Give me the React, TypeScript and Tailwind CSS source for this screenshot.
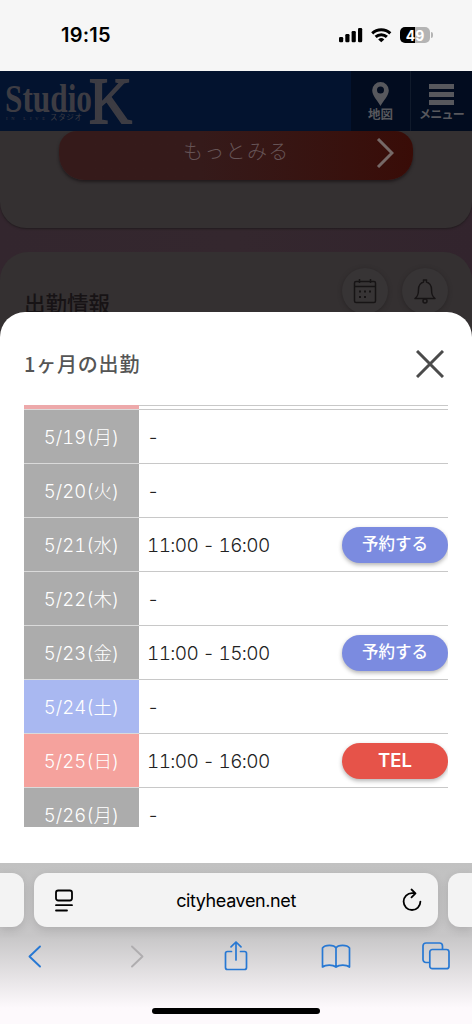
import React from "react";

const JP = "font-['Inter','Noto_Sans_CJK_JP',sans-serif]";

type Kind = "weekday" | "saturday" | "sunday";

interface Shift {
  date: string;
  kind: Kind;
  time?: string;
  action?: "reserve" | "tel";
}

const shifts: Shift[] = [
  { date: "5/19(月)", kind: "weekday" },
  { date: "5/20(火)", kind: "weekday" },
  { date: "5/21(水)", kind: "weekday", time: "11:00 - 16:00", action: "reserve" },
  { date: "5/22(木)", kind: "weekday" },
  { date: "5/23(金)", kind: "weekday", time: "11:00 - 15:00", action: "reserve" },
  { date: "5/24(土)", kind: "saturday" },
  { date: "5/25(日)", kind: "sunday", time: "11:00 - 16:00", action: "tel" },
  { date: "5/26(月)", kind: "weekday" },
];

const dayColor: Record<Kind, string> = {
  weekday: "bg-[#acacac]",
  saturday: "bg-[#a9b8f1]",
  sunday: "bg-[#f5a29d]",
};

function StatusBar() {
  return (
    <div className="flex h-[71px] shrink-0 justify-between bg-[#f6f6f6] pl-[61px] pr-[39px] text-black">
      <span className="mt-[21px] text-[20px] leading-[28px] font-semibold tracking-[0.2px]">19:15</span>
      <div className="mt-[27px] flex h-4 items-start">
        <svg width="24" height="16" viewBox="0 0 24 16">
          <rect x="0" y="10" width="4.2" height="5.3" rx="1.2" />
          <rect x="6.3" y="7" width="4.2" height="8.3" rx="1.2" />
          <rect x="12.6" y="4" width="4.2" height="11.3" rx="1.2" />
          <rect x="19" y="1" width="4.2" height="14.3" rx="1.2" />
        </svg>
        <svg className="ml-2" width="21" height="16" viewBox="0 0 21 16" fill="none" stroke="black" strokeWidth="3">
          <path d="M1.2 6.300a13.200 13.200 0 0 1 18.100 0" />
          <path d="M4.600 9.900a8.300 8.300 0 0 1 11.300 0" />
          <path d="M10.250 15.200 7.200 12.400a4.500 4.500 0 0 1 6.100 0z" fill="black" stroke="none" />
        </svg>
        <div className="ml-[8px] flex h-4 w-[30px] items-center justify-center rounded-[5px] bg-linear-to-r from-black from-50% to-[#b4b4b4] to-50% text-[14px] font-bold text-white">
          49
        </div>
        <div className="mt-[5px] ml-[1px] h-[6px] w-[2px] rounded-r-full bg-[#b4b4b4]" />
      </div>
    </div>
  );
}

function SiteHeader() {
  return (
    <div className="flex h-[60px] shrink-0 bg-[#03132f] text-[#57585d]">
      <svg width="140" height="60" viewBox="0 0 140 60" fill="#3d3c43" fontFamily="Liberation Serif, serif">
        <text x="5" y="40.500" fontSize="39" fontWeight="700" textLength="87" lengthAdjust="spacingAndGlyphs">Studio</text>
        <text x="89" y="52" fontSize="66" textLength="43" lengthAdjust="spacingAndGlyphs" stroke="#3d3c43" strokeWidth="1.800">K</text>
        <text x="6" y="48.500" fontSize="4.500" textLength="39">IN LIVE</text>
        <text x="50" y="49" fontSize="7.500" fontFamily="Noto Sans CJK JP, sans-serif" textLength="32">スタジオ</text>
      </svg>
      <div className="ml-auto flex w-[60px] flex-col items-center border-r border-[#101a2b] bg-[#020c1f]">
        <svg className="mt-[11px]" width="17" height="24" viewBox="0 0 17 24" fill="currentColor" fillRule="evenodd">
          <path d="M8.500 0A8.300 8.300 0 0 0 .2 8.300C.2 14 5.500 18.500 8.500 24c3-5.500 8.300-10 8.300-15.700A8.300 8.300 0 0 0 8.500 0Zm0 4.600a3.500 3.500 0 1 1 0 7 3.500 3.500 0 0 1 0-7Z" />
        </svg>
        <span className="text-[12.5px] leading-[18px] font-bold">地図</span>
      </div>
      <div className="flex w-[61px] flex-col items-center bg-[#020c1f]">
        <div className="mt-[13px] flex w-[25px] flex-col gap-[3px]">
          <div className="h-[5px] bg-current" />
          <div className="h-[5px] bg-current" />
          <div className="h-[5px] bg-current" />
        </div>
        <span className="mt-[1px] text-[12px] leading-[18px] font-bold whitespace-nowrap tracking-[-0.8px]">メニュー</span>
      </div>
    </div>
  );
}

function PageBehind() {
  return (
    <div className="flex h-[220px] shrink-0 flex-col bg-linear-to-r from-[#33262e] via-[#34272e] to-[#32242d]">
      <div className="flex h-[97px] shrink-0 justify-center rounded-b-[26px] bg-[#343031] shadow-[0_1px_2px_#211b1e]">
        <div className="flex h-[49px] w-[354px] items-center rounded-b-[25px] rounded-t-[18px] bg-linear-to-r from-[#351a1a] from-40% to-[#390c07] pr-[19px] pl-[124px] text-[#665456] shadow-[0_2px_3px_#211b1d]">
          <span className="-mt-[8px] text-[20px] font-light tracking-[1.3px]">もっとみる</span>
          <svg className="-mt-[5px] ml-auto" width="18" height="30" viewBox="0 0 18 30" fill="none" stroke="#766967" strokeWidth="3">
            <path d="m2 1 14 14L2 29" />
          </svg>
        </div>
      </div>
      <div className="mt-6 flex flex-1 items-start justify-between rounded-t-[28px] bg-[#343031] pr-6 pl-6">
        <span className="mt-[36px] text-[21.5px] leading-[32px] font-medium text-[#171315]">出勤情報</span>
        <div className="mt-4 flex gap-[14px] text-[#171415]">
          <div className="flex size-[46px] items-center justify-center rounded-full bg-[#373435] shadow-[0_1px_4px_#292526]">
            <svg width="24" height="26" viewBox="0 0 24 26" fill="none" stroke="currentColor" strokeWidth="1.500">
              <rect x="1.500" y="3.500" width="21" height="21" rx="1.500" />
              <path d="M1.500 8.500h21M6.500 1v4M17.500 1v4" />
              <path d="M11 13.500h2M16 13.500h2M6 13.500h2M6 19h2M11 19h2" strokeWidth="2" />
            </svg>
          </div>
          <div className="flex size-[46px] items-center justify-center rounded-full bg-[#373435] shadow-[0_1px_4px_#292526]">
            <svg width="24" height="26" viewBox="0 0 24 26" fill="none" stroke="currentColor" strokeWidth="1.500" strokeLinejoin="round">
              <path d="M2 20.500h20c-2.500-2-3.500-3.500-3.500-9 0-4-2.500-6.800-5-7.500V2h-3v2c-2.500.700-5 3.500-5 7.500 0 5.500-1 7-3.500 9Z" />
              <circle cx="12" cy="23" r="2" />
            </svg>
          </div>
        </div>
      </div>
    </div>
  );
}

function ShiftRow({ shift }: { shift: Shift }) {
  return (
    <div className="flex h-[54px] shrink-0">
      <div className={`flex w-[115px] items-center justify-center border-b border-[#dadada] pt-[2px] text-[18.5px] font-light tabular-nums text-white ${dayColor[shift.kind]}`}>
        {shift.date}
      </div>
      <div className="flex flex-1 items-center justify-between border-b border-[#c8c8c8] pl-[8px] text-[19px] font-light text-[#222] tabular-nums">
        <span className="pt-[3px] tracking-[-0.65px]">{shift.time ?? "-"}</span>
        {shift.action === "reserve" && (
          <button className="h-9 w-[106px] rounded-full bg-[#7b8be0] text-[16.5px] font-medium text-white shadow-[0_2px_4px_#0000004d]">予約する</button>
        )}
        {shift.action === "tel" && (
          <button className="h-9 w-[106px] rounded-full bg-[#e65349] text-[18.5px] font-semibold text-white shadow-[0_2px_4px_#0000004d]">TEL</button>
        )}
      </div>
    </div>
  );
}

function ScheduleSheet() {
  return (
    <div className="relative -mt-[39px] flex h-[551px] shrink-0 flex-col rounded-t-[25px] bg-white px-6">
      <div className="flex h-[93px] shrink-0 items-center justify-between pt-[11px]">
        <h2 className="pb-[1px] font-['Noto_Sans_CJK_JP',sans-serif] text-[20px] font-medium tracking-[0.8px] text-[#555]">1ヶ月の出勤</h2>
        <svg className="mr-1" width="28" height="28" viewBox="0 0 28 28" stroke="#4b4b4b" strokeWidth="3">
          <path d="m1 1 26 26M27 1 1 27" />
        </svg>
      </div>
      <div className="flex h-[422px] flex-col overflow-hidden">
        <div className="flex h-[5px] shrink-0">
          <div className="w-[115px] border-b border-[#dadada] bg-[#eda9aa]" />
          <div className="flex-1 border-y border-[#c8c8c8]" />
        </div>
        {shifts.map((shift) => (
          <ShiftRow key={shift.date} shift={shift} />
        ))}
      </div>
    </div>
  );
}

function BrowserBar() {
  return (
    <div className="flex h-[161px] shrink-0 flex-col overflow-hidden bg-linear-to-b from-[#c1c1c1] from-0% via-[#c7c6c7] via-45% to-[#fdf9fc] to-90%">
      <div className="mt-[10px] flex h-[54px] shrink-0 gap-[10px]">
        <div className="w-6 rounded-r-[12px] bg-[#f3f3f3] shadow-[0_3px_10px_#00000020]" />
        <div className="flex flex-1 items-center justify-between rounded-[13px] bg-[#f3f3f3] pr-[16px] pl-[21px] text-black shadow-[0_3px_10px_#00000020]">
          <svg width="18" height="23" viewBox="0 0 18 23" fill="none" stroke="currentColor" strokeWidth="1.800" strokeLinecap="round">
            <rect x="1" y="1.500" width="16" height="10" rx="2.200" />
            <path d="M1 16.200h16M1 21.500h11" />
          </svg>
          <span className="mr-[3px] text-[18px] tracking-[-0.4px]">cityheaven.net</span>
          <svg width="20" height="24" viewBox="0 0 20 24" fill="none" stroke="currentColor" strokeWidth="1.800" strokeLinecap="round" strokeLinejoin="round">
            <path d="M13 5.200H10a8.400 8.400 0 1 0 8.400 8.400M9.500 1.500l4 3.800-4 4" />
          </svg>
        </div>
        <div className="w-6 rounded-l-[12px] bg-[#f3f3f3] shadow-[0_3px_10px_#00000020]" />
      </div>
      <div className="mt-[12px] -ml-[14px] grid h-[34px] w-[500px] shrink-0 grid-cols-5 place-items-center text-[#2778d3]">
        <svg className="mr-[2px]" width="14" height="24" viewBox="0 0 14 24" fill="none" stroke="currentColor" strokeWidth="1.900" strokeLinecap="round" strokeLinejoin="round">
          <path d="M12 2.500 1.500 12.500 12 22.500" />
        </svg>
        <svg className="ml-[2px]" width="14" height="24" viewBox="0 0 14 24" fill="none" stroke="#afadaf" strokeWidth="1.900" strokeLinecap="round" strokeLinejoin="round">
          <path d="m2 2.500 10.500 10L2 22.500" />
        </svg>
        <svg className="-mt-[1px]" width="24" height="32" viewBox="0 0 24 32" fill="none" stroke="currentColor" strokeWidth="1.700" strokeLinecap="round" strokeLinejoin="round">
          <path d="M7.500 11.500H3.500a2 2 0 0 0-2 2v14a2 2 0 0 0 2 2h17a2 2 0 0 0 2-2v-14a2 2 0 0 0-2-2h-4M12 20V2M7 6.800 12 2l5 4.800" />
        </svg>
        <svg width="30" height="26" viewBox="0 0 30 26" fill="none" stroke="currentColor" strokeWidth="1.700" strokeLinecap="round" strokeLinejoin="round">
          <path d="M15 24V5C13 1.500 4 1.500 1.500 5v19c3-2.500 10.500-2.500 13.500 0 3-2.500 10.500-2.500 13.500 0V5C26 1.500 17 1.500 15 5" />
        </svg>
        <svg width="28" height="28" viewBox="0 0 28 28" fill="none" stroke="currentColor" strokeWidth="1.700">
          <rect x="7.800" y="7.500" width="19.200" height="19.200" rx="2.500" />
          <path d="M7.800 20.500H4a3 3 0 0 1-3-3V4a3 3 0 0 1 3-3h13.500a3 3 0 0 1 3 3v3.500" />
        </svg>
      </div>
      <div className="mx-auto mt-[35px] h-[6px] w-[168px] shrink-0 rounded-full bg-black" />
    </div>
  );
}

export default function App() {
  return (
    <div className={`mx-auto flex h-[1024px] w-[472px] flex-col overflow-hidden bg-white ${JP}`}>
      <StatusBar />
      <SiteHeader />
      <PageBehind />
      <ScheduleSheet />
      <BrowserBar />
    </div>
  );
}
